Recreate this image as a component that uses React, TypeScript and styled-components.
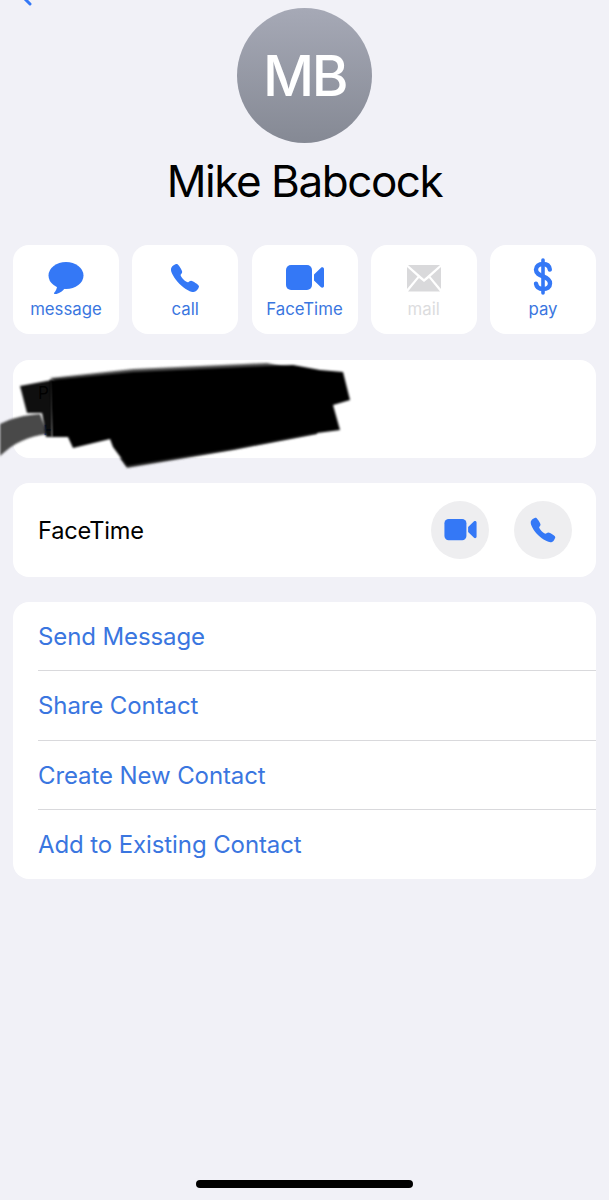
import styled, { createGlobalStyle } from "styled-components";
import { IoCall } from "react-icons/io5";

const BLUE = "#3478f6";

const GlobalStyle = createGlobalStyle`
  html, body {
    margin: 0;
    padding: 0;
    background: #f1f1f7;
  }
  * {
    box-sizing: border-box;
  }
`;

const quickActions = [
  { label: "message", icon: "message" },
  { label: "call", icon: "call" },
  { label: "FaceTime", icon: "video" },
  { label: "mail", icon: "mail", disabled: true },
  { label: "pay", icon: "pay" },
];

const contactActions = [
  "Send Message",
  "Share Contact",
  "Create New Contact",
  "Add to Existing Contact",
];

function MessageIcon() {
  return (
    <svg width="36" height="32" viewBox="0 0 36 32">
      <ellipse cx="18" cy="13.5" rx="17.5" ry="13.5" fill={BLUE} />
      <path
        d="M9 22 C9.5 26 8 29 6 31 C5.5 32 7 32.4 8.5 32 C12 31 15 29 17 26 Z"
        fill={BLUE}
      />
    </svg>
  );
}

function VideoIcon({ width, height }: { width: number; height: number }) {
  return (
    <svg width={width} height={height} viewBox="0 0 38 26">
      <rect x="0" y="0" width="26" height="25" rx="5" fill={BLUE} />
      <path
        d="M28 9.5 L35 2.8 C36 1.8 38 2.4 38 4 L38 21 C38 22.6 36 23.2 35 22.2 L28 15.5 Z"
        fill={BLUE}
      />
    </svg>
  );
}

function MailIcon() {
  return (
    <svg width="34" height="27" viewBox="0 0 34 27">
      <path d="M1 0 H33 L17 14 Z" fill="#d9d9db" />
      <path d="M0 2 L10.5 11.5 L0 24 Z" fill="#d9d9db" />
      <path d="M34 2 L23.5 11.5 L34 24 Z" fill="#d9d9db" />
      <path d="M12 13 L17 17 L22 13 L33 26.5 H1 Z" fill="#d9d9db" />
    </svg>
  );
}

function DollarIcon() {
  return (
    <DollarSvg width="20" height="37" viewBox="0 0 20 37">
      <path d="M10 2 V35" stroke={BLUE} strokeWidth="3.6" strokeLinecap="round" />
      <path
        d="M16.8 11.5 C16.3 7.6 13.6 6 10 6 C6 6 3 8 3 11.8 C3 15.6 6.4 17 10 18.4 C13.8 19.9 17 21.4 17 25.4 C17 29.2 14 31 10 31 C6.4 31 3.6 29.4 3 25.6"
        fill="none"
        stroke={BLUE}
        strokeWidth="4.4"
        strokeLinecap="round"
      />
    </DollarSvg>
  );
}

function ActionIcon({ icon }: { icon: string }) {
  if (icon === "message") return <MessageIcon />;
  if (icon === "call") return <IoCall size={32} color={BLUE} />;
  if (icon === "video") return <VideoIcon width={38} height={26} />;
  if (icon === "mail") return <MailIcon />;
  return <DollarIcon />;
}

function App() {
  return (
    <Page>
      <GlobalStyle />
      <BackChevron viewBox="0 0 12 6">
        <path d="M4 -1 L9 4" stroke={BLUE} strokeWidth="3" strokeLinecap="round" />
      </BackChevron>
      <Avatar>MB</Avatar>
      <Name>Mike Babcock</Name>
      <QuickActions>
        {quickActions.map((action) => (
          <QuickAction key={action.label}>
            <IconSlot>
              <ActionIcon icon={action.icon} />
            </IconSlot>
            <QuickLabel $disabled={action.disabled}>{action.label}</QuickLabel>
          </QuickAction>
        ))}
      </QuickActions>
      <PhoneCard>
        <PhoneLabel>P</PhoneLabel>
        <PhoneNumber>+</PhoneNumber>
        <Scribble viewBox="0 360 360 120">
          <defs>
            <filter id="soft" x="-10%" y="-10%" width="120%" height="120%">
              <feGaussianBlur stdDeviation="1.2" />
            </filter>
          </defs>
          <path
            d="M0 424 C12 418 24 415 40 414 L48 434 C28 436 14 443 0 456 Z"
            fill="#4a4a4a"
            filter="url(#soft)"
          />
          <path
            d="M20 386 L52 380 L52 437 L46 437 L42 413 L27 413 Z"
            fill="#000"
            fillOpacity="0.94"
            filter="url(#soft)"
          />
          <path
            d="M50 378 L133 369 L267 363 L290 368 L200 376 L60 386 Z"
            fill="#555"
            filter="url(#soft)"
          />
          <path
            d="M127 468 L233 450 L317 434 L317 428 L200 442 L120 458 Z"
            fill="#444"
            filter="url(#soft)"
          />
          <path
            d="M50 380 L133 372 L267 366 L293 365 L320 370 L343 372 L350 400 L333 405 L340 430 L317 433 L233 449 L127 466 L113 447 L110 439 L73 448 L68 437 L52 437 Z"
            fill="#000"
            filter="url(#soft)"
          />
        </Scribble>
      </PhoneCard>
      <FaceTimeCard>
        <FaceTimeLabel>FaceTime</FaceTimeLabel>
        <RoundButtons>
          <RoundButton>
            <VideoIcon width={33} height={22} />
          </RoundButton>
          <RoundButton>
            <IoCall size={28} color={BLUE} />
          </RoundButton>
        </RoundButtons>
      </FaceTimeCard>
      <ActionList>
        {contactActions.map((text) => (
          <ActionRow key={text}>{text}</ActionRow>
        ))}
      </ActionList>
      <HomeBar />
    </Page>
  );
}

const Page = styled.div`
  position: relative;
  width: 609px;
  height: 1200px;
  padding: 8px 13px 0;
  display: flex;
  flex-direction: column;
  align-items: center;
  background: #f1f1f7;
  font-family: Inter, "Liberation Sans", sans-serif;
  overflow: hidden;
`;

const BackChevron = styled.svg`
  position: absolute;
  left: 21px;
  top: 0;
  width: 12px;
  height: 6px;
`;

const Avatar = styled.div`
  width: 135px;
  height: 135px;
  border-radius: 50%;
  display: flex;
  align-items: center;
  justify-content: center;
  background: linear-gradient(#a6a9b6, #858994);
  color: #fff;
  font-size: 56px;
  font-weight: 500;
  letter-spacing: -2.5px;
`;

const Name = styled.h1`
  margin: 9px 0 0;
  height: 59px;
  font-size: 44px;
  line-height: 59px;
  font-weight: 400;
  letter-spacing: -1.45px;
  color: #000;
`;

const QuickActions = styled.div`
  width: 100%;
  margin-top: 34px;
  display: grid;
  grid-template-columns: repeat(5, 106px);
  justify-content: space-between;
`;

const QuickAction = styled.div`
  height: 89px;
  border-radius: 16px;
  background: #fff;
  display: flex;
  flex-direction: column;
  align-items: center;
  padding-top: 15px;
`;

const IconSlot = styled.div`
  height: 36px;
  display: flex;
  align-items: center;
  justify-content: center;
`;

const DollarSvg = styled.svg`
  margin-top: -3px;
`;

const QuickLabel = styled.div<{ $disabled?: boolean }>`
  margin-top: 2px;
  font-size: 16.8px;
  line-height: 22px;
  color: ${({ $disabled }) => ($disabled ? "#dcdcde" : "#3a76e0")};
`;

const Card = styled.section`
  width: 100%;
  background: #fff;
  border-radius: 16px;
`;

const PhoneCard = styled(Card)`
  position: relative;
  height: 98px;
  margin-top: 26px;
  padding: 21px 25px 0;
`;

const PhoneLabel = styled.div`
  font-size: 17px;
  line-height: 24px;
  color: #000;
`;

const PhoneNumber = styled.div`
  margin-top: 9px;
  font-size: 22px;
  line-height: 28px;
  color: ${BLUE};
`;

const Scribble = styled.svg`
  position: absolute;
  left: -13px;
  top: 0;
  width: 360px;
  height: 120px;
  overflow: visible;
`;

const FaceTimeCard = styled(Card)`
  height: 94px;
  margin-top: 25px;
  padding: 0 24px 0 25px;
  display: flex;
  align-items: center;
  justify-content: space-between;
`;

const FaceTimeLabel = styled.div`
  font-size: 23.6px;
  color: #000;
  letter-spacing: -0.2px;
`;

const RoundButtons = styled.div`
  display: flex;
  gap: 25px;
`;

const RoundButton = styled.div`
  width: 58px;
  height: 58px;
  border-radius: 50%;
  background: #eeeef0;
  display: flex;
  align-items: center;
  justify-content: center;
`;

const ActionList = styled(Card)`
  height: 277px;
  margin-top: 25px;
  padding-left: 25px;
  display: grid;
  grid-auto-rows: 1fr;
`;

const ActionRow = styled.div`
  display: flex;
  align-items: center;
  padding-top: 1px;
  font-size: 24px;
  letter-spacing: -0.1px;
  color: #3a76e0;
  border-bottom: 1px solid #d9d9dc;
  &:last-child {
    border-bottom: none;
  }
`;

const HomeBar = styled.div`
  position: absolute;
  left: 196px;
  top: 1180px;
  width: 217px;
  height: 8px;
  border-radius: 4px;
  background: #000;
`;

export default App;
